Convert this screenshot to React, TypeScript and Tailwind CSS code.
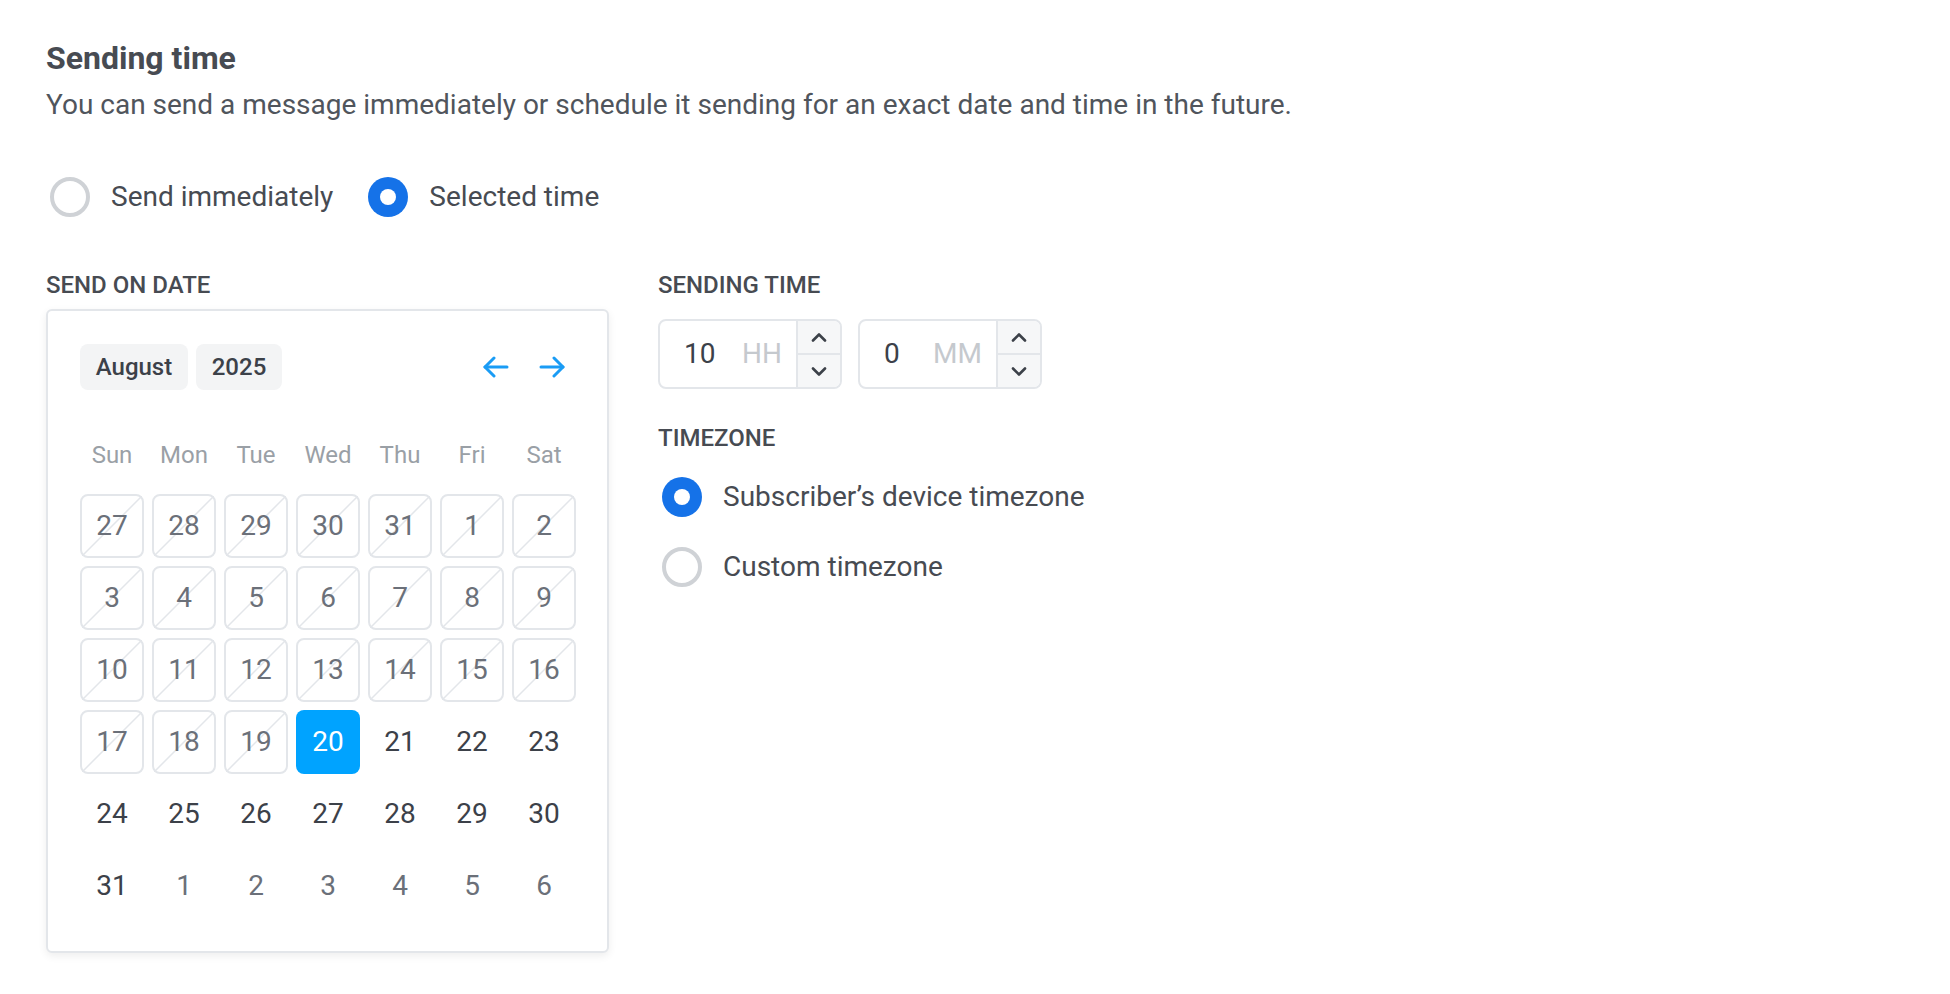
import { useState } from "react";

const WEEKDAYS = ["Sun", "Mon", "Tue", "Wed", "Thu", "Fri", "Sat"];

type Day = { n: number; state: "past" | "today" | "current" | "next" };

function buildDays(): Day[] {
  const days: Day[] = [];
  [27, 28, 29, 30, 31].forEach((n) => days.push({ n, state: "past" }));
  for (let n = 1; n <= 19; n++) days.push({ n, state: "past" });
  days.push({ n: 20, state: "today" });
  for (let n = 21; n <= 31; n++) days.push({ n, state: "current" });
  for (let n = 1; n <= 6; n++) days.push({ n, state: "next" });
  return days;
}

function Radio({ checked, label }: { checked: boolean; label: string }) {
  return (
    <label className="flex items-center gap-[21px] cursor-pointer h-[40px]">
      {checked ? (
        <span className="flex h-[40px] w-[40px] shrink-0 items-center justify-center rounded-full bg-[#1572e8]">
          <span className="h-[16px] w-[16px] rounded-full bg-white" />
        </span>
      ) : (
        <span className="h-[40px] w-[40px] shrink-0 rounded-full border-[4px] border-[#cfd2d6] bg-white" />
      )}
      <span className="text-[28px] leading-[40px] text-[#474b52]">{label}</span>
    </label>
  );
}

function Arrow({ dir }: { dir: "left" | "right" }) {
  return (
    <svg width="26" height="22" viewBox="0 0 26 22" fill="none" stroke="#1a9cf5" strokeWidth="3" strokeLinecap="round" strokeLinejoin="round">
      {dir === "left" ? (
        <>
          <path d="M2 11h22" />
          <path d="M11 2 2 11l9 9" />
        </>
      ) : (
        <>
          <path d="M2 11h22" />
          <path d="M15 2l9 9-9 9" />
        </>
      )}
    </svg>
  );
}

function Chevron({ up }: { up?: boolean }) {
  return (
    <svg width="16" height="9" viewBox="0 0 16 9" fill="none" stroke="#3c4149" strokeWidth="2.6" strokeLinecap="round" strokeLinejoin="round">
      {up ? <path d="M2 7.5 8 1.5l6 6" /> : <path d="M2 1.5l6 6 6-6" />}
    </svg>
  );
}

function TimeInput({ value, placeholder }: { value: string; placeholder: string }) {
  return (
    <div className="flex h-[70px] w-[184px] overflow-hidden rounded-[8px] border-2 border-[#e3e6ea] bg-white">
      <div className="flex flex-1 items-center justify-between pl-[24px] pr-[14px] text-[28px]">
        <span className="text-[#3c4149]">{value}</span>
        <span className="text-[#c5c9ce]">{placeholder}</span>
      </div>
      <div className="flex w-[44px] flex-col border-l-2 border-[#e3e6ea] bg-[#f6f7f8]">
        <button className="flex flex-1 items-center justify-center border-b-2 border-[#e3e6ea]">
          <Chevron up />
        </button>
        <button className="flex flex-1 items-center justify-center">
          <Chevron />
        </button>
      </div>
    </div>
  );
}

function DayCell({ day }: { day: Day }) {
  if (day.state === "today") {
    return (
      <div className="flex h-[64px] w-[64px] items-center justify-center rounded-[8px] bg-[#00a3ff] text-[28px] text-white">
        {day.n}
      </div>
    );
  }
  if (day.state === "past") {
    return (
      <div className="relative flex h-[64px] w-[64px] items-center justify-center rounded-[8px] border-2 border-[#e3e6ea] text-[28px] text-[#6b7079]">
        <svg className="absolute inset-0 h-full w-full" viewBox="0 0 60 60" preserveAspectRatio="none">
          <line x1="0" y1="60" x2="60" y2="0" stroke="#e3e6ea" strokeWidth="1.5" />
        </svg>
        <span className="relative">{day.n}</span>
      </div>
    );
  }
  return (
    <div
      className={
        day.state === "current"
          ? "flex h-[64px] w-[64px] items-center justify-center text-[28px] text-[#3c4149]"
          : "flex h-[64px] w-[64px] items-center justify-center text-[28px] text-[#6b7079]"
      }
    >
      {day.n}
    </div>
  );
}

function Calendar() {
  const days = buildDays();
  return (
    <div className="w-[563px] rounded-[6px] border-2 border-[#e3e6ea] bg-white px-[32px] pt-[33px] pb-[33px] shadow-[0_3px_8px_rgba(0,0,0,0.07)]">
      <div className="flex h-[46px] items-center">
        <button className="h-[46px] w-[108px] rounded-[8px] bg-[#f3f4f5] text-[24px] font-medium text-[#3c4149]">
          August
        </button>
        <button className="ml-[8px] h-[46px] w-[86px] rounded-[8px] bg-[#f3f4f5] text-[24px] font-medium text-[#3c4149]">
          2025
        </button>
        <div className="ml-auto mr-[3px] flex gap-[16px]">
          <button className="flex h-[46px] w-[40px] items-center justify-center">
            <Arrow dir="left" />
          </button>
          <button className="flex h-[46px] w-[40px] items-center justify-center">
            <Arrow dir="right" />
          </button>
        </div>
      </div>
      <div className="mt-[49px] grid grid-cols-[repeat(7,64px)] gap-x-[8px]">
        {WEEKDAYS.map((d) => (
          <div key={d} className="text-center text-[24px] leading-[32px] text-[#9aa0a6]">
            {d}
          </div>
        ))}
      </div>
      <div className="mt-[23px] grid grid-cols-[repeat(7,64px)] gap-[8px]">
        {days.map((d, i) => (
          <DayCell key={i} day={d} />
        ))}
      </div>
    </div>
  );
}

export default function App() {
  const [mode] = useState<"now" | "selected">("selected");
  return (
    <div className="min-h-screen bg-white px-[46px] pt-[38px] font-[Roboto,sans-serif] text-[#474b52]">
      <h2 className="text-[32px] font-bold leading-[40px] text-[#474b52]">Sending time</h2>
      <p className="mt-[7px] text-[28px] leading-[40px] text-[#50555c]">
        You can send a message immediately or schedule it sending for an exact date and time in the future.
      </p>

      <div className="mt-[52px] flex items-center gap-[35px] pl-[4px]">
        <Radio checked={mode === "now"} label="Send immediately" />
        <Radio checked={mode === "selected"} label="Selected time" />
      </div>

      <div className="mt-[52px] flex gap-[49px]">
        <div>
          <div className="text-[24px] font-medium leading-[32px] text-[#474b52]">SEND ON DATE</div>
          <div className="mt-[8px]">
            <Calendar />
          </div>
        </div>

        <div>
          <div className="text-[24px] font-medium leading-[32px] text-[#474b52]">SENDING TIME</div>
          <div className="mt-[18px] flex gap-[16px]">
            <TimeInput value="10" placeholder="HH" />
            <TimeInput value="0" placeholder="MM" />
          </div>

          <div className="mt-[33px] text-[24px] font-medium leading-[32px] text-[#474b52]">TIMEZONE</div>
          <div className="mt-[23px] flex flex-col gap-[30px] pl-[4px]">
            <Radio checked label="Subscriber’s device timezone" />
            <Radio checked={false} label="Custom timezone" />
          </div>
        </div>
      </div>
    </div>
  );
}
